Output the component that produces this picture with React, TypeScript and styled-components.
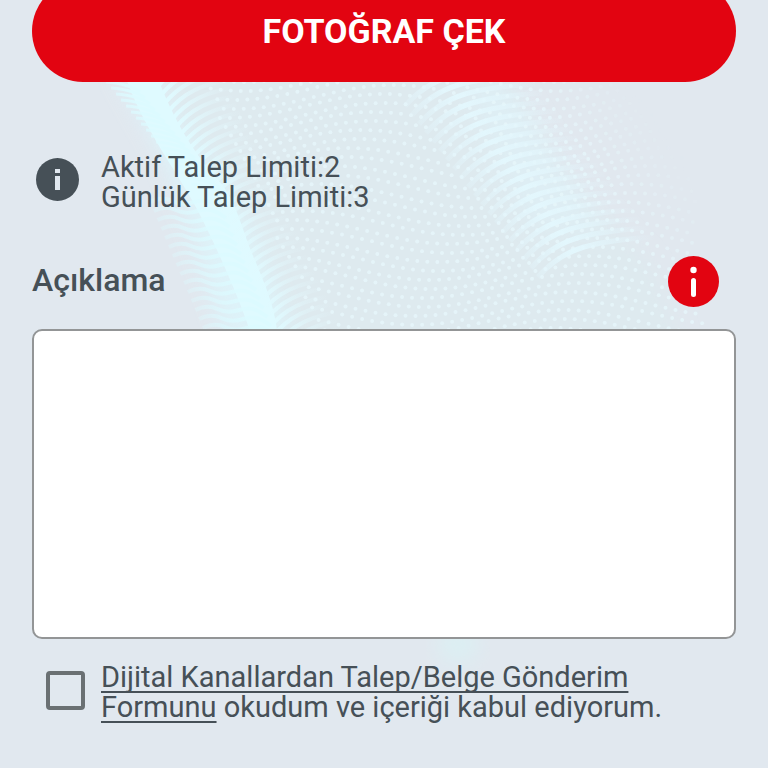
import React, { useId, useState } from "react";
import styled, { createGlobalStyle } from "styled-components";

const GlobalStyle = createGlobalStyle`
  *, *::before, *::after { box-sizing: border-box; }
  body {
    margin: 0;
    background: #e1e8ef;
    color: #465057;
    font-family: Roboto, "Open Sans", sans-serif;
  }
`;

const Page = styled.div`
  position: relative;
  overflow: hidden;
  min-height: 100vh;
`;

const Backdrop = styled.svg`
  position: absolute;
  inset: 0;
  width: 100%;
  height: 100%;
  pointer-events: none;
`;

const Form = styled.form`
  position: relative;
  display: flex;
  flex-direction: column;
  margin-top: -20px;
  padding: 0 32px 44px;
`;

const PhotoButton = styled.button`
  height: 102px;
  border: 0;
  border-radius: 51px;
  background: #e20411;
  color: #fff;
  font: 700 34px/40px Roboto, "Open Sans", sans-serif;
  cursor: pointer;
`;

const TextRow = styled.div<{ $top: number }>`
  display: grid;
  grid-template-columns: 69px 1fr;
  align-items: start;
  margin-top: ${({ $top }) => $top}px;
  font-size: 29px;
  line-height: 30px;
`;

const IconSlot = styled.div`
  display: flex;
  padding: 6px 0 0 4px;
`;

const Limits = styled.p`
  margin: 0;
`;

const FieldHeader = styled.div`
  display: flex;
  align-items: center;
  justify-content: space-between;
  margin-top: 44px;
  padding-right: 17px;
`;

const FieldLabel = styled.label`
  padding-bottom: 4px;
  font-size: 32px;
  font-weight: 500;
  line-height: 40px;
`;

const HelpButton = styled.button`
  display: flex;
  padding: 0;
  border: 0;
  border-radius: 50%;
  background: none;
  cursor: pointer;
`;

const Description = styled.textarea`
  display: block;
  width: 100%;
  height: 310px;
  margin-top: 22px;
  padding: 16px;
  border: 2px solid #939596;
  border-radius: 10px;
  background: #fff;
  color: inherit;
  font: 400 29px/36px Roboto, "Open Sans", sans-serif;
  resize: none;
`;

const CheckSlot = styled.div`
  display: flex;
  padding: 9px 0 0 14px;
`;

const Checkbox = styled.input`
  appearance: none;
  width: 39px;
  height: 39px;
  margin: 0;
  border: 4px solid #6a7073;
  border-radius: 4px;
  background: transparent;
  cursor: pointer;

  &:checked {
    background: #6a7073;
    box-shadow: inset 0 0 0 5px #e1e8ef;
  }
`;

const Consent = styled.label`
  max-width: 600px;
`;

const FormLink = styled.a`
  color: inherit;
  text-decoration: underline;
  text-decoration-thickness: 2px;
  text-underline-offset: 4px;
  text-decoration-skip-ink: none;
`;

type Dot = { x: number; y: number; r: number; o: number };

const dots: Dot[] = [];
for (let row = 0; row < 31; row++) {
  for (let col = 0; col < 54; col++) {
    const x = 164 + col * 10 + (row % 2) * 5 + Math.sin(row / 4) * 7;
    const y = 70 + row * 9 + Math.sin(col / 5 + row / 9) * 12;
    const ridge = 175 + (y - 80) * 0.48;
    const far = 520 + (y - 80) * 0.7;
    if (x < ridge + 26 || y > 336) continue;
    const fade = x > far ? Math.max(0, 1 - (x - far) / 110) : 1;
    if (fade > 0) dots.push({ x, y, r: 2, o: 0.9 * fade });
  }
}

const rightWaves = Array.from({ length: 36 }, (_, i) => {
  const y = 78 + i * 8;
  const x = 148 + (y - 80) * 0.47;
  return `M${x} ${y + 10}C${x + 13} ${y - 10} ${x + 30} ${y - 24} ${x + 66} ${y - 30}`;
});

const leftWaves = Array.from({ length: 16 }, (_, i) => {
  const y = 200 + i * 9;
  const x = 212 + (y - 200) * 0.42;
  return `M${x + 10} ${y + 9}c-12-9-18-10-28-7s-16 2-22-1-14-3-22 1`;
});

const upperWaves = Array.from({ length: 18 }, (_, i) => {
  const y = 92 + i * 6;
  const x = 140 + i * 5;
  return `M${x} ${y}q-10 -8 -34 -10`;
});

const distantWaves = Array.from({ length: 20 }, (_, i) => {
  const y = 72 + i * 9;
  const x = 405 + i * 7;
  return `M${x} ${y + 34}C${x + 26} ${y + 4} ${x + 56} ${y - 2} ${x + 116} ${y - 6}`;
});

function WaveBackdrop() {
  const id = useId();
  const left = `${id}left`;
  const right = `${id}right`;
  const far = `${id}far`;
  const upper = `${id}upper`;
  const soft = `${id}soft`;
  return (
    <Backdrop viewBox="0 0 768 768" preserveAspectRatio="xMidYMin slice" aria-hidden="true">
      <defs>
        <linearGradient id={left} gradientUnits="userSpaceOnUse" x1="156" y1="282" x2="232" y2="250">
          <stop offset="0" stopColor="#dcfaff" stopOpacity="0" />
          <stop offset="1" stopColor="#dcfaff" />
        </linearGradient>
        <linearGradient id={upper} gradientUnits="userSpaceOnUse" x1="142" y1="168" x2="172" y2="145">
          <stop offset="0" stopColor="#dcfaff" stopOpacity="0" />
          <stop offset="1" stopColor="#dcfaff" />
        </linearGradient>
        <linearGradient id={right} gradientUnits="userSpaceOnUse" x1="215" y1="200" x2="271" y2="174">
          <stop offset="0" stopColor="#dffaff" />
          <stop offset="1" stopColor="#e3f6fb" stopOpacity="0" />
        </linearGradient>
        <linearGradient id={far} gradientUnits="userSpaceOnUse" x1="450" y1="190" x2="560" y2="108">
          <stop offset="0" stopColor="#e3f6fd" stopOpacity="0" />
          <stop offset="0.45" stopColor="#e3f7fd" />
          <stop offset="1" stopColor="#e3f6fd" stopOpacity="0" />
        </linearGradient>
        <filter id={soft} x="-30%" y="-30%" width="160%" height="160%">
          <feGaussianBlur stdDeviation="10" />
        </filter>
      </defs>
      <path
        d="M150 65H500L570 180L650 265L680 340H270L190 160Z"
        fill="#deeaef"
        filter={`url(#${soft})`}
      />
      <path
        d="M455 60H490L600 235L530 225Z"
        fill="#def1f8"
        opacity="0.6"
        filter={`url(#${soft})`}
      />
      <path
        d="M115 72L152 76L191 143L224 176L250 235L293 338H225L195 235L155 142Z"
        fill="#dcf7fd"
        opacity="0.7"
        filter={`url(#${soft})`}
      />
      <path
        d="M125 76H157C170 110 188 147 218 180C237 200 243 235 257 265C267 290 276 310 278 340H253C240 299 216 246 198 211C179 174 145 132 125 76Z"
        fill="#dffaff"
      />
      <g fill="#e6f5fa">
        {dots.map((dot, i) => (
          <circle key={i} cx={dot.x} cy={dot.y} r={dot.r} opacity={dot.o} />
        ))}
      </g>
      <g fill="none" strokeWidth="4">
        <path d={rightWaves.join("")} stroke={`url(#${right})`} />
        <path d={leftWaves.join("")} stroke={`url(#${left})`} />
        <path d={upperWaves.join("")} stroke={`url(#${upper})`} strokeWidth="3" />
        <path d={distantWaves.join("")} stroke={`url(#${far})`} strokeWidth="5" />
      </g>
      <ellipse cx="458" cy="644" rx="20" ry="20" fill="#dceff3" filter={`url(#${soft})`} />
    </Backdrop>
  );
}

function LimitIcon() {
  return (
    <svg width="43" height="43" viewBox="0 0 43 43" aria-hidden="true">
      <circle cx="21.5" cy="21.5" r="21.5" fill="#465057" />
      <path d="M19 11h5v4h-5zM19 18h5v14h-5z" fill="#e1e8ef" />
    </svg>
  );
}

function HelpIcon() {
  return (
    <svg width="51" height="51" viewBox="0 0 51 51" aria-hidden="true">
      <circle cx="25.5" cy="25.5" r="25.5" fill="#e20411" />
      <circle cx="25.5" cy="14" r="3.2" fill="#fff" />
      <path d="M25.5 24.5v14" stroke="#fff" strokeWidth="5" strokeLinecap="round" />
    </svg>
  );
}

export default function App() {
  const [accepted, setAccepted] = useState(false);
  return (
    <Page>
      <GlobalStyle />
      <WaveBackdrop />
      <Form onSubmit={(event) => event.preventDefault()}>
        <PhotoButton type="button">FOTOĞRAF ÇEK</PhotoButton>
        <TextRow $top={70}>
          <IconSlot>
            <LimitIcon />
          </IconSlot>
          <Limits>
            Aktif Talep Limiti:2
            <br />
            Günlük Talep Limiti:3
          </Limits>
        </TextRow>
        <FieldHeader>
          <FieldLabel htmlFor="description">Açıklama</FieldLabel>
          <HelpButton type="button" aria-label="Bilgi">
            <HelpIcon />
          </HelpButton>
        </FieldHeader>
        <Description id="description" />
        <TextRow $top={23}>
          <CheckSlot>
            <Checkbox
              id="consent"
              type="checkbox"
              checked={accepted}
              onChange={(event) => setAccepted(event.target.checked)}
            />
          </CheckSlot>
          <Consent htmlFor="consent">
            <FormLink href="#form">Dijital Kanallardan Talep/Belge Gönderim Formunu</FormLink> okudum ve
            içeriği kabul ediyorum.
          </Consent>
        </TextRow>
      </Form>
    </Page>
  );
}
